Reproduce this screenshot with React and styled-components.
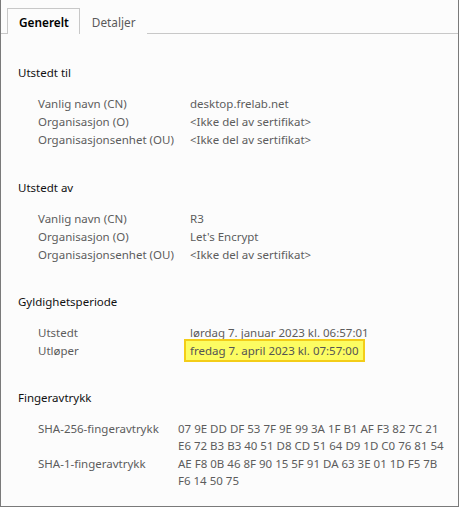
import React from 'react';
import styled, { createGlobalStyle } from 'styled-components';

const GlobalStyle = createGlobalStyle`
  body {
    margin: 0;
    background: #fcfcfc;
    font-family: "Noto Sans", "Open Sans", Arial, sans-serif;
  }
`;

const Window = styled.div`
  width: 459px;
  height: 507px;
  box-sizing: border-box;
  background: #fcfcfc;
  border: 1px solid #7a7a7a;
  border-top: 0;
  display: flex;
  flex-direction: column;
  overflow: hidden;
`;

const TabStrip = styled.div`
  display: flex;
  align-items: flex-end;
  height: 34px;
  box-sizing: border-box;
  padding-left: 6px;
  border-bottom: 1px solid #c8c8c8;
`;

const Tab = styled.div`
  height: 26px;
  box-sizing: border-box;
  margin-bottom: -1px;
  padding: 0 10px 0 11px;
  display: flex;
  align-items: center;
  font-size: 11.8px;
  cursor: default;
  color: ${({ active }) => (active ? '#000' : '#5a5a5a')};
  font-weight: ${({ active }) => (active ? 600 : 400)};
  background: #fcfcfc;
  border: 1px solid ${({ active }) => (active ? '#c8c8c8' : 'transparent')};
  border-bottom: 0;
`;

const Panel = styled.div`
  flex: 1;
  padding-left: 17px;
`;

const Section = styled.section`
  margin-top: ${({ top }) => top}px;
`;

const Heading = styled.div`
  font-size: 11.5px;
  line-height: 17px;
  color: #111;
  margin-bottom: 14px;
`;

const Rows = styled.div`
  display: grid;
  grid-template-columns: ${({ labelWidth }) => labelWidth}px 1fr;
  row-gap: 1px;
  padding-left: 20px;
  font-size: 11.5px;
  line-height: 17px;
  color: #5c5c5c;
`;

const Value = styled.div`
  white-space: nowrap;
`;

const Highlight = styled.span`
  display: inline-block;
  margin: -3px 0 -3px -6px;
  padding: 1px 4px;
  line-height: 17px;
  background: #fcfc62;
  border: 2px solid #f3cd18;
  color: #545454;
`;

const chunk = (hex, size) => {
  const bytes = hex.split(' ');
  const lines = [];
  for (let i = 0; i < bytes.length; i += size) lines.push(bytes.slice(i, i + size).join(' '));
  return lines;
};

const sha256 =
  '07 9E DD DF 53 7F 9E 99 3A 1F B1 AF F3 82 7C 21 E6 72 B3 B3 40 51 D8 CD 51 64 D9 1D C0 76 81 54';
const sha1 = 'AE F8 0B 46 8F 90 15 5F 91 DA 63 3E 01 1D F5 7B F6 14 50 75';

const issuedTo = [
  ['Vanlig navn (CN)', 'desktop.frelab.net'],
  ['Organisasjon (O)', '<Ikke del av sertifikat>'],
  ['Organisasjonsenhet (OU)', '<Ikke del av sertifikat>'],
];

const issuedBy = [
  ['Vanlig navn (CN)', 'R3'],
  ['Organisasjon (O)', "Let's Encrypt"],
  ['Organisasjonsenhet (OU)', '<Ikke del av sertifikat>'],
];

const Pairs = ({ items }) =>
  items.map(([label, value]) => (
    <React.Fragment key={label}>
      <div>{label}</div>
      <Value>{value}</Value>
    </React.Fragment>
  ));

const App = () => (
  <>
    <GlobalStyle />
    <Window>
      <TabStrip>
        <Tab active>Generelt</Tab>
        <Tab>Detaljer</Tab>
      </TabStrip>
      <Panel>
        <Section top={30}>
          <Heading>Utstedt til</Heading>
          <Rows labelWidth={152}>
            <Pairs items={issuedTo} />
          </Rows>
        </Section>

        <Section top={31}>
          <Heading>Utstedt av</Heading>
          <Rows labelWidth={152}>
            <Pairs items={issuedBy} />
          </Rows>
        </Section>

        <Section top={30}>
          <Heading>Gyldighetsperiode</Heading>
          <Rows labelWidth={152}>
            <div>Utstedt</div>
            <Value>lørdag 7. januar 2023 kl. 06:57:01</Value>
            <div>Utløper</div>
            <Value>
              <Highlight>fredag 7. april 2023 kl. 07:57:00</Highlight>
            </Value>
          </Rows>
        </Section>

        <Section top={30}>
          <Heading>Fingeravtrykk</Heading>
          <Rows labelWidth={140}>
            <div>SHA-256-fingeravtrykk</div>
            <Value>
              {chunk(sha256, 16).map(line => (
                <div key={line}>{line}</div>
              ))}
            </Value>
            <div>SHA-1-fingeravtrykk</div>
            <Value>
              {chunk(sha1, 16).map(line => (
                <div key={line}>{line}</div>
              ))}
            </Value>
          </Rows>
        </Section>
      </Panel>
    </Window>
  </>
);

export default App;
